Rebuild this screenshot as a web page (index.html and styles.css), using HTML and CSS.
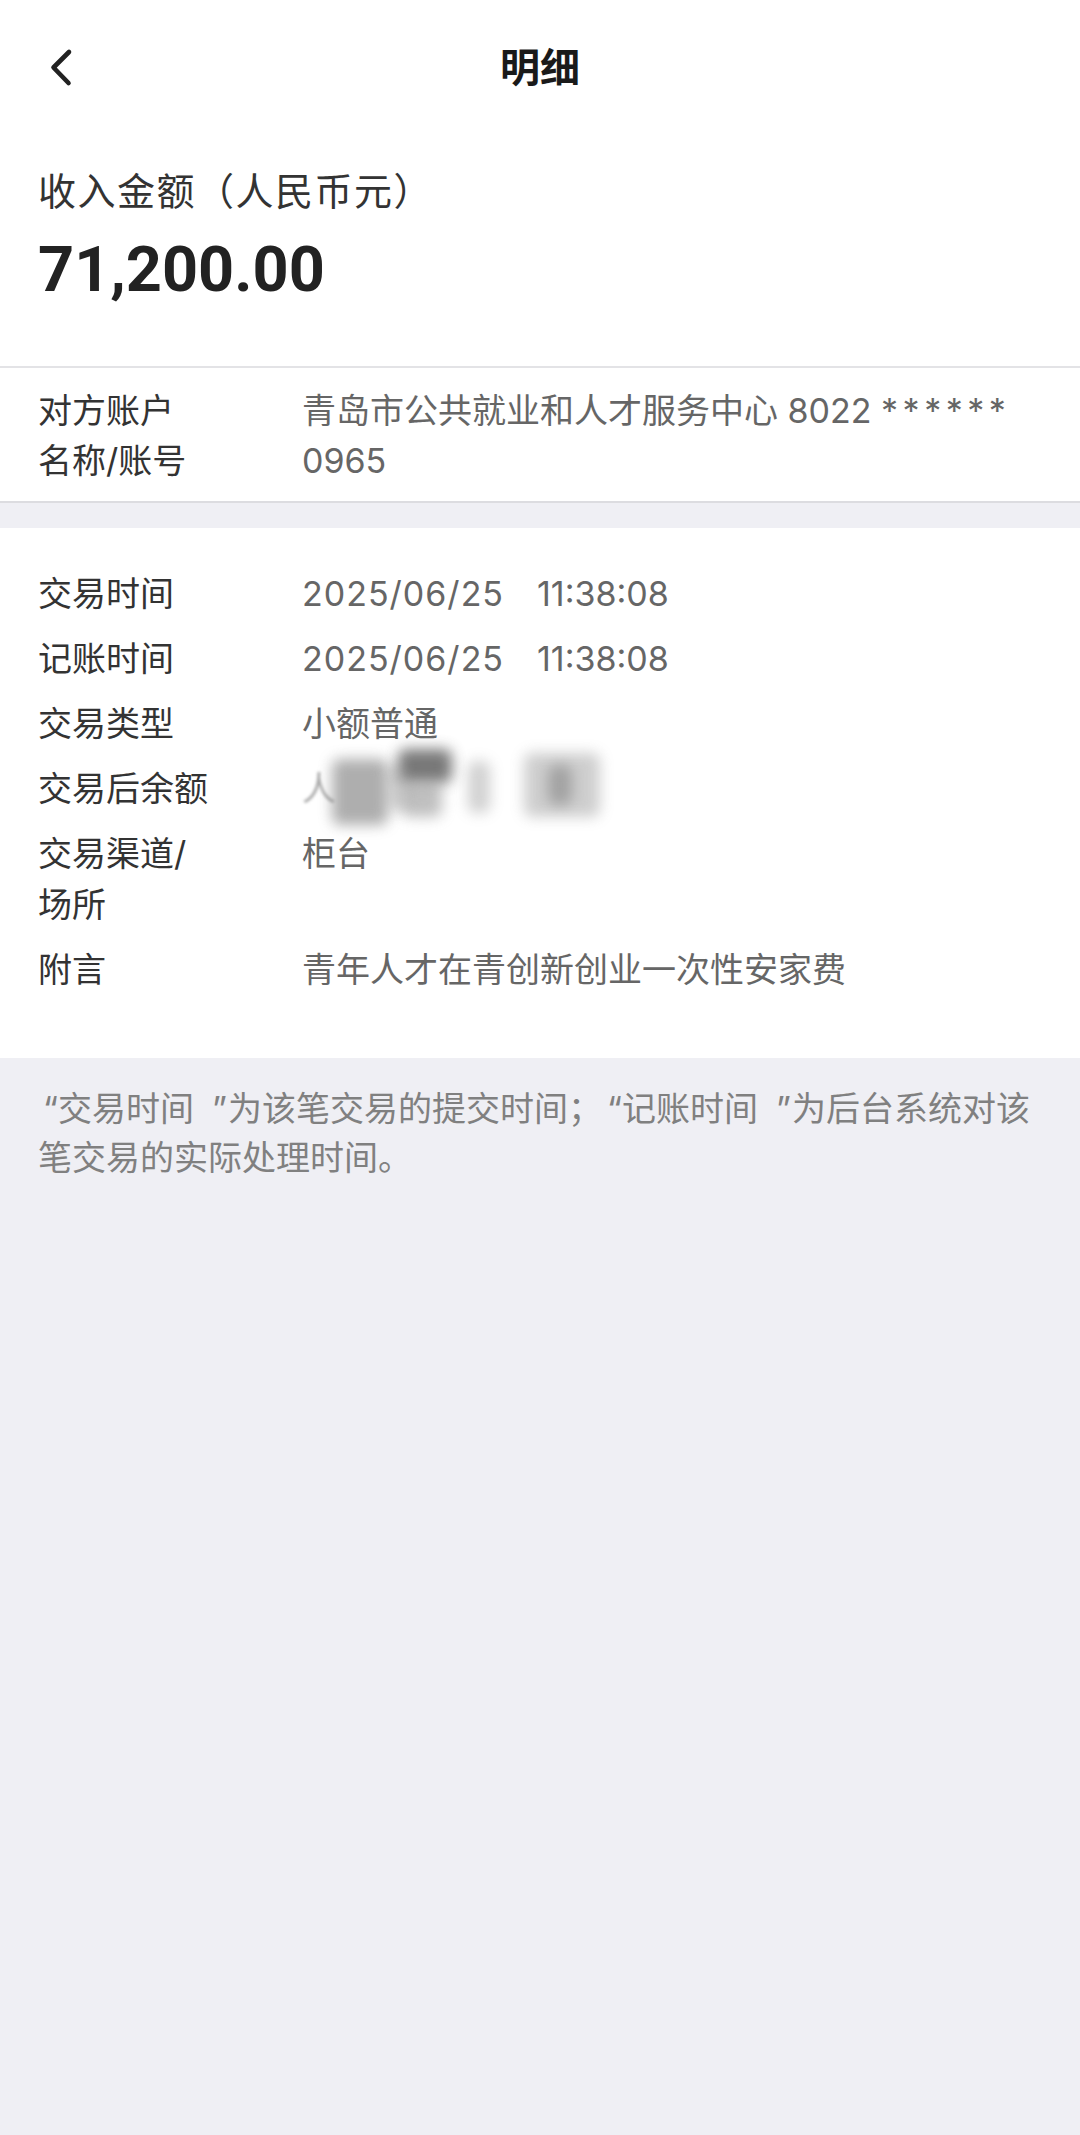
FILE: index.html
```html
<!DOCTYPE html>
<html lang="zh-CN">
<head>
<meta charset="utf-8">
<title>明细</title>
<link rel="stylesheet" href="styles.css">
</head>
<body>
<div class="page">
  <header class="nav">
    <div class="nav-left">
      <svg class="back" width="28" height="44" viewBox="0 0 28 44" aria-hidden="true">
        <path d="M21 6 L5.5 21.5 L20.5 37" fill="none" stroke="#222" stroke-width="4.6" stroke-linecap="round" stroke-linejoin="round"/>
      </svg>
    </div>
    <h1 class="nav-title">明细</h1>
    <div class="nav-right"></div>
  </header>

  <section class="summary">
    <div class="summary-label">收入金额（人民币元）</div>
    <div class="summary-amount">71,200.00</div>
  </section>

  <section class="account">
    <div class="grid">
      <div class="label">对方账户<br>名称/账号</div>
      <div class="value">青岛市公共就业和人才服务中心 8022 <span class="stars">******</span><br>0965</div>
    </div>
  </section>

  <div class="spacer"></div>

  <section class="details">
    <div class="grid rows">
      <div class="label">交易时间</div>
      <div class="value"><span class="date">2025/06/25</span><span class="time">11:38:08</span></div>

      <div class="label">记账时间</div>
      <div class="value"><span class="date">2025/06/25</span><span class="time">11:38:08</span></div>

      <div class="label">交易类型</div>
      <div class="value">小额普通</div>

      <div class="label">交易后余额</div>
      <div class="value masked">
        <span class="masked-text">人</span>
        <span class="smudge s1"></span>
        <span class="smudge s2"></span>
        <span class="smudge s3"></span>
        <span class="smudge s4"></span>
        <span class="smudge s5"></span>
        <span class="smudge s6"></span>
        <span class="smudge s7"></span>
      </div>

      <div class="label">交易渠道/<br>场所</div>
      <div class="value">柜台</div>

      <div class="label">附言</div>
      <div class="value">青年人才在青创新创业一次性安家费</div>
    </div>
  </section>

  <p class="note"><span class="q-open">“</span>交易时间<span class="q-close">”</span>为该笔交易的提交时间；<span class="q-open">“</span>记账时间<span class="q-close">”</span>为后台系统对该<br>笔交易的实际处理时间。</p>
</div>
</body>
</html>
```

FILE: styles.css
```css
html, body {
  margin: 0;
  padding: 0;
}

body {
  background: #efeff4;
  font-family: Inter, "Noto Sans CJK SC", sans-serif;
  color: #333;
  text-spacing-trim: space-all;
}

.page {
  width: 1080px;
  min-height: 2135px;
  background: #efeff4;
}

.nav {
  display: grid;
  grid-template-columns: 1fr auto 1fr;
  align-items: center;
  height: 136px;
  background: #fff;
}

.nav-left {
  display: flex;
  align-items: center;
  padding-left: 48px;
}

.back {
  display: block;
  margin-top: -1px;
}

.nav-title {
  margin: 0;
  font-size: 40px;
  font-weight: 700;
  color: #1a1a1a;
  line-height: 56px;
}

.summary {
  background: #fff;
  padding: 26px 38px 58px;
  border-bottom: 2px solid #e3e3e6;
}

.summary-label {
  font-family: "Noto Sans CJK SC", sans-serif;
  font-size: 38px;
  letter-spacing: 1.5px;
  line-height: 53px;
  color: #333;
}

.summary-amount {
  margin-top: 16px;
  font-family: Roboto, sans-serif;
  font-size: 63px;
  line-height: 77px;
  font-weight: 700;
  color: #222;
}

.account {
  background: #fff;
  padding: 18px 38px 15px;
  border-bottom: 2px solid #dcdce0;
}

.spacer {
  height: 25px;
  background: #efeff4;
}

.grid {
  display: grid;
  grid-template-columns: 264px 1fr;
  font-size: 34px;
  line-height: 50px;
}

.rows {
  row-gap: 14px;
  line-height: 51px;
}

.label {
  color: #333;
}

.value {
  color: #666;
}

.stars {
  letter-spacing: 4.5px;
}

.date {
  letter-spacing: 1px;
}

.time {
  margin-left: 33px;
}

.details {
  background: #fff;
  padding: 40px 38px 63px;
}

.masked {
  position: relative;
  height: 51px;
}

.masked-text {
  color: #aaa;
  filter: blur(1.5px);
}

.smudge {
  position: absolute;
  background: #8c8c8c;
  filter: blur(7px);
  border-radius: 8px;
}

.s1 { left: 30px;  top: -4px;  width: 56px; height: 66px; opacity: 0.7; }
.s2 { left: 96px;  top: -14px; width: 54px; height: 34px; opacity: 0.9; background: #6a6a6a; }
.s3 { left: 100px; top: 18px;  width: 40px; height: 36px; opacity: 0.55; }
.s4 { left: 86px;  top: 2px;   width: 20px; height: 46px; opacity: 0.4; }
.s5 { left: 166px; top: -2px;  width: 22px; height: 52px; opacity: 0.4; }
.s6 { left: 222px; top: -10px; width: 76px; height: 64px; opacity: 0.42; }
.s7 { left: 246px; top: 2px;   width: 24px; height: 40px; opacity: 0.5; background: #777; }

.note {
  margin: 0;
  padding: 26px 38px 25px;
  font-size: 34px;
  line-height: 49px;
  color: #808080;
}

.q-open {
  margin-left: 5px;
}

.q-close {
  margin-left: 18px;
  margin-right: 1px;
}
```
